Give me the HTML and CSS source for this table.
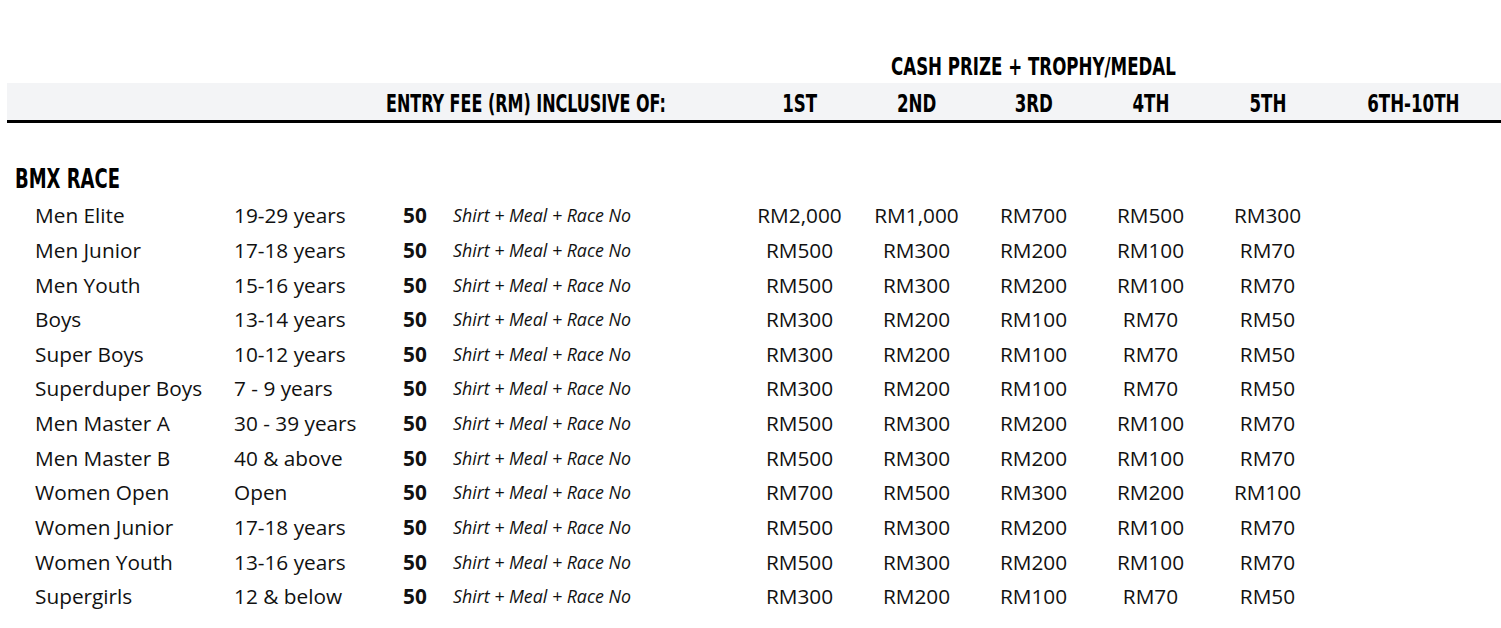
FILE: index.html
```html
<!DOCTYPE html>
<html>
<head>
<meta charset="utf-8">
<link rel="stylesheet" href="styles.css">
</head>
<body>
<div class="sheet">
  <div class="grid title-row">
    <div class="prize-title"><span class="cond">CASH PRIZE + TROPHY/MEDAL</span></div>
  </div>
  <div class="grid head-row">
    <div class="h-entry"><span class="cond cond-left">ENTRY FEE (RM) INCLUSIVE OF:</span></div>
    <div class="h-c"><span class="cond">1ST</span></div>
    <div class="h-c"><span class="cond">2ND</span></div>
    <div class="h-c"><span class="cond">3RD</span></div>
    <div class="h-c"><span class="cond">4TH</span></div>
    <div class="h-c"><span class="cond">5TH</span></div>
    <div class="h-c"><span class="cond">6TH-10TH</span></div>
  </div>
  <div class="section"><span class="cond cond-left">BMX RACE</span></div>
  <div class="rows">
    <div class="grid row"><span></span><span>Men Elite</span><span>19-29 years</span><b class="fee">50</b><i class="inc">Shirt + Meal + Race No</i><span class="p">RM2,000</span><span class="p">RM1,000</span><span class="p">RM700</span><span class="p">RM500</span><span class="p">RM300</span><span></span></div>
    <div class="grid row"><span></span><span>Men Junior</span><span>17-18 years</span><b class="fee">50</b><i class="inc">Shirt + Meal + Race No</i><span class="p">RM500</span><span class="p">RM300</span><span class="p">RM200</span><span class="p">RM100</span><span class="p">RM70</span><span></span></div>
    <div class="grid row"><span></span><span>Men Youth</span><span>15-16 years</span><b class="fee">50</b><i class="inc">Shirt + Meal + Race No</i><span class="p">RM500</span><span class="p">RM300</span><span class="p">RM200</span><span class="p">RM100</span><span class="p">RM70</span><span></span></div>
    <div class="grid row"><span></span><span>Boys</span><span>13-14 years</span><b class="fee">50</b><i class="inc">Shirt + Meal + Race No</i><span class="p">RM300</span><span class="p">RM200</span><span class="p">RM100</span><span class="p">RM70</span><span class="p">RM50</span><span></span></div>
    <div class="grid row"><span></span><span>Super Boys</span><span>10-12 years</span><b class="fee">50</b><i class="inc">Shirt + Meal + Race No</i><span class="p">RM300</span><span class="p">RM200</span><span class="p">RM100</span><span class="p">RM70</span><span class="p">RM50</span><span></span></div>
    <div class="grid row"><span></span><span>Superduper Boys</span><span>7 - 9 years</span><b class="fee">50</b><i class="inc">Shirt + Meal + Race No</i><span class="p">RM300</span><span class="p">RM200</span><span class="p">RM100</span><span class="p">RM70</span><span class="p">RM50</span><span></span></div>
    <div class="grid row"><span></span><span>Men Master A</span><span>30 - 39 years</span><b class="fee">50</b><i class="inc">Shirt + Meal + Race No</i><span class="p">RM500</span><span class="p">RM300</span><span class="p">RM200</span><span class="p">RM100</span><span class="p">RM70</span><span></span></div>
    <div class="grid row"><span></span><span>Men Master B</span><span>40 &amp; above</span><b class="fee">50</b><i class="inc">Shirt + Meal + Race No</i><span class="p">RM500</span><span class="p">RM300</span><span class="p">RM200</span><span class="p">RM100</span><span class="p">RM70</span><span></span></div>
    <div class="grid row"><span></span><span>Women Open</span><span>Open</span><b class="fee">50</b><i class="inc">Shirt + Meal + Race No</i><span class="p">RM700</span><span class="p">RM500</span><span class="p">RM300</span><span class="p">RM200</span><span class="p">RM100</span><span></span></div>
    <div class="grid row"><span></span><span>Women Junior</span><span>17-18 years</span><b class="fee">50</b><i class="inc">Shirt + Meal + Race No</i><span class="p">RM500</span><span class="p">RM300</span><span class="p">RM200</span><span class="p">RM100</span><span class="p">RM70</span><span></span></div>
    <div class="grid row"><span></span><span>Women Youth</span><span>13-16 years</span><b class="fee">50</b><i class="inc">Shirt + Meal + Race No</i><span class="p">RM500</span><span class="p">RM300</span><span class="p">RM200</span><span class="p">RM100</span><span class="p">RM70</span><span></span></div>
    <div class="grid row"><span></span><span>Supergirls</span><span>12 &amp; below</span><b class="fee">50</b><i class="inc">Shirt + Meal + Race No</i><span class="p">RM300</span><span class="p">RM200</span><span class="p">RM100</span><span class="p">RM70</span><span class="p">RM50</span><span></span></div>
  </div>
</div>
</body>
</html>
```
FILE: styles.css
```css
* { box-sizing: border-box; }
html, body { margin: 0; padding: 0; background: #fff; }
body {
  font-family: "Open Sans", "Liberation Sans", sans-serif;
  color: #111;
}
.sheet {
  margin-left: 7px;
  width: 1494px;
}
.grid {
  display: grid;
  grid-template-columns: 28px 199px 156px 50px 301px repeat(5, 117px) 1fr;
  align-items: center;
}
.cond {
  display: inline-block;
  font-family: "DejaVu Sans Condensed", "DejaVu Sans", sans-serif;
  font-weight: bold;
  color: #000;
  transform: scaleX(0.74);
  transform-origin: center;
  white-space: nowrap;
}
.cond-left { transform-origin: left center; }
.title-row {
  height: 83px;
  align-items: end;
}
.prize-title {
  grid-column: 6 / 11;
  text-align: center;
  font-size: 25px;
  line-height: 30px;
  padding-bottom: 1px;
}
.head-row {
  height: 40px;
  background: #f3f4f6;
  border-bottom: 3px solid #000;
  font-size: 25px;
  padding-top: 1px;
}
.h-entry {
  grid-column: 1 / 6;
  padding-left: 379px;
  white-space: nowrap;
}
.h-entry .cond { transform: scaleX(0.71); }
.h-c { text-align: center; white-space: nowrap; }
.section {
  margin-top: 39px;
  padding-left: 8px;
  font-size: 27px;
  line-height: 32px;
}
.rows { margin-top: 3px; }
.row {
  height: 34.64px;
  font-size: 20.8px;
  white-space: nowrap;
}
.fee { text-align: center; font-weight: bold; }
.inc { padding-left: 13px; font-size: 17.8px; }
.p { text-align: center; }
```
